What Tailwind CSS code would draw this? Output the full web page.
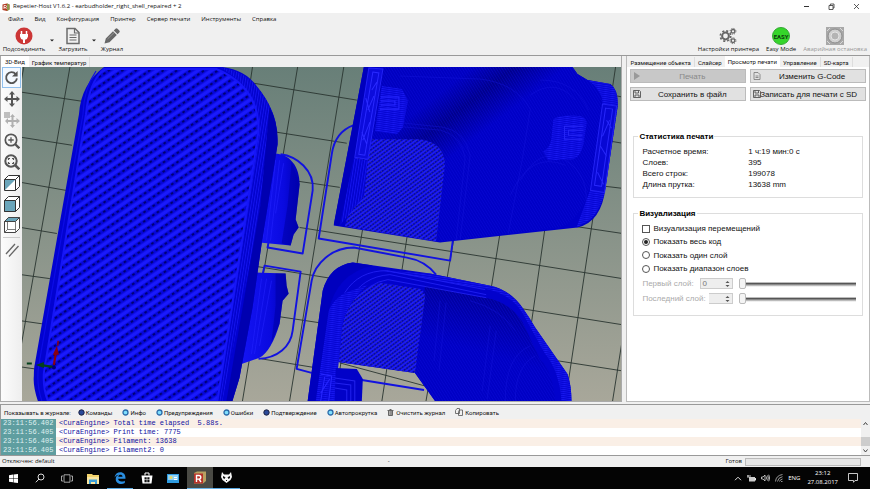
<!DOCTYPE html>
<html lang="ru">
<head>
<meta charset="utf-8">
<title>Repetier-Host V1.6.2</title>
<script src="https://cdn.jsdelivr.net/npm/@tailwindcss/browser@4"></script>
</head>
<body class="flex h-screen flex-col overflow-hidden bg-[#f0f0f0] font-['Open_Sans',sans-serif] text-[6px] leading-[9px] text-[#111]">

<!-- Title bar -->
<header class="flex h-[13px] shrink-0 items-center bg-white pl-[2px]">
  <svg class="size-[8px]" viewBox="0 0 16 16"><path d="M1 3l9-2 5 2v10l-5 3-9-2z" fill="#b23a22"/><path d="M10 1l5 2v10l-5 3z" fill="#8a9a4a"/><path d="M4 12V5h3a2 2 0 010 4H4m3 0l2 3" stroke="#fff" stroke-width="1.6" fill="none"/></svg>
  <h1 class="ml-[3px] flex-1 truncate">Repetier-Host V1.6.2 - earbudholder_right_shell_repaired + 2</h1>
  <div class="flex items-center gap-[18px] pr-[10px]">
    <button aria-label="Свернуть"><svg class="size-[7px]" viewBox="0 0 7 7"><path d="M1 3.5h5" stroke="#333"/></svg></button>
    <button aria-label="Восстановить"><svg class="size-[7px]" viewBox="0 0 7 7" fill="none" stroke="#333" stroke-width=".8"><path d="M1 2.5h4v4H1zM2.4 2.5V1H6v4H5"/></svg></button>
    <button aria-label="Закрыть"><svg class="size-[7px]" viewBox="0 0 7 7"><path d="M1 1l5 5M6 1L1 6" stroke="#333" stroke-width=".8"/></svg></button>
  </div>
</header>

<!-- Menu -->
<nav class="flex h-[12px] shrink-0 items-center gap-[11px] pl-[8px]">
  <button>Файл</button><button>Вид</button><button>Конфигурация</button><button>Принтер</button><button>Сервер печати</button><button>Инструменты</button><button>Справка</button>
</nav>

<!-- Toolbar -->
<div class="flex h-[30px] shrink-0 items-start justify-between pr-[3px] pl-[2px] pt-[2px]">
  <div class="flex items-start">
    <button class="flex w-[44px] flex-col items-center">
      <svg class="size-[18px]" viewBox="0 0 18 18"><circle cx="9" cy="9" r="8.5" fill="#cc3636"/><path d="M6.5 4v3M11.500 4v3" stroke="#fff" stroke-width="1.500"/><path d="M5 7h8v2.500a4 4 0 01-3 3.300V16H8v-3.200A4 4 0 015 9.500z" fill="#fff"/></svg>
      <span>Подсоединить</span>
    </button>
    <span class="mt-[12px] w-[12px] pl-[4px]"><svg class="h-[3px] w-[4px]" viewBox="0 0 4 3"><path d="M0 .5h4L2 2.500z" fill="#222"/></svg></span>
    <button class="flex w-[30px] flex-col items-center">
      <svg class="size-[18px]" viewBox="0 0 18 18" fill="none" stroke="#6b6b6b" stroke-width="1.500"><path d="M3 1.500h8l4 4v11H3z"/><path d="M10.500 1.500V6H15M5.500 8h7M5.500 10.500h7M5.500 13h7" stroke-width="1.200"/></svg>
      <span>Загрузить</span>
    </button>
    <span class="mt-[12px] w-[12px] pl-[4px]"><svg class="h-[3px] w-[4px]" viewBox="0 0 4 3"><path d="M0 .5h4L2 2.500z" fill="#222"/></svg></span>
    <button class="flex w-[24px] flex-col items-center">
      <svg class="size-[18px]" viewBox="0 0 18 18" fill="#686868"><path d="M1.500 16.500l1.300-5L10 4.300l3.800 3.800-7.300 7.200zM10.800 3.500l1.700-1.700q1-1 2 0l1.800 1.800q1 1 0 2l-1.700 1.700z"/><path d="M4.500 12L11 5.700" stroke="#aaa" stroke-width=".7"/></svg>
      <span>Журнал</span>
    </button>
  </div>
  <div class="flex items-start gap-[7px]">
    <button class="flex flex-col items-center">
      <svg class="size-[18px]" viewBox="0 0 18 18" fill="none" stroke="#666"><circle cx="6.500" cy="9" r="3.400" stroke-width="2"/><circle cx="6.500" cy="9" r="5.200" stroke-width="1.600" stroke-dasharray="2.100 2"/><circle cx="14" cy="4.300" r="1.800" stroke-width="1.300"/><circle cx="14" cy="4.300" r="2.900" stroke-dasharray="1.200 1.100"/><circle cx="14" cy="13.700" r="1.800" stroke-width="1.300"/><circle cx="14" cy="13.700" r="2.900" stroke-dasharray="1.200 1.100"/></svg>
      <span>Настройки принтера</span>
    </button>
    <button class="flex flex-col items-center">
      <span class="flex size-[18px] items-center justify-center rounded-full border border-[#35a835] bg-[#35d52a] font-[Roboto,sans-serif] text-[6px] font-bold text-[#0d3c0d]">EASY</span>
      <span>Easy Mode</span>
    </button>
    <button class="flex flex-col items-center text-[#999]" disabled>
      <svg class="size-[18px]" viewBox="0 0 18 18"><path d="M0 0h18v18H0z" fill="#a8a8a8"/><circle cx="9" cy="9" r="7" fill="#cfcfcf" stroke="#8c8c8c"/><circle cx="9" cy="9" r="4" fill="#b4b4b4" stroke="#e4e4e4"/><path d="M1 4l3-3M14 1l3 3M1 14l3 3M14 17l3-3" stroke="#d8d8d8"/></svg>
      <span>Аварийная остановка</span>
    </button>
  </div>
</div>

<!-- Workspace -->
<main class="flex min-h-0 flex-1 border-t border-[#999] bg-[#f0f0f0]">
  <section class="flex min-w-0 flex-1 flex-col border-r border-b border-l border-[#aaa]">
    <div class="flex h-[11px] shrink-0 items-stretch font-[Roboto,sans-serif] text-[6px]" role="tablist">
      <button role="tab" aria-selected="true" class="bg-white px-[4px]">3D-Вид</button>
      <button role="tab" class="mt-px border-r border-[#ddd] px-[3px]">График температур</button>
    </div>
    <div class="flex min-h-0 flex-1">
      <div class="flex w-[21px] shrink-0 flex-col items-center bg-linear-to-r from-[#fcfcfc] to-[#eee]">
        <button aria-label="Вращать" class="flex h-[21px] w-[19px] items-center justify-center border border-[#90c0ee] bg-[#f4f9ff]"><svg class="size-[15px]" viewBox="0 0 16 16" fill="none"><path d="M12.600 4.500A5.800 5.800 0 1013.800 9" stroke="#555" stroke-width="2"/><path d="M14.500 1v6h-6z" fill="#555"/></svg></button>
        <button aria-label="Переместить" class="flex h-[21px] items-center"><svg class="size-[16px]" viewBox="0 0 16 16" fill="#555"><path d="M8 0l3 3.500H9V7h3.500V5L16 8l-3.500 3V9H9v3.500h2L8 16l-3-3.500h2V9H3.500v2L0 8l3.500-3v2H7V3.500H5z"/></svg></button>
        <button aria-label="Переместить объект" class="flex h-[21px] items-center" disabled><svg class="size-[16px]" viewBox="0 0 16 16" fill="#b0b0b0"><path d="M8.500 2l2.500 3H9.500v3h3V6L16 9l-3.500 3v-2h-3v3H11l-2.500 3L6 13h1.500v-3H4v2L1 9l3-3v2h3.500V5H6z"/><path d="M0 0h6v6H0z" opacity=".8"/></svg></button>
        <button aria-label="Масштаб" class="flex h-[21px] items-center"><svg class="size-[16px]" viewBox="0 0 16 16" fill="none" stroke="#555"><circle cx="7" cy="7" r="5.700" stroke-width="1.700"/><path d="M11 11l4.300 4.300" stroke-width="2.300"/><path d="M4.300 7h5.400M7 4.300v5.400" stroke-width="1.300"/></svg></button>
        <button aria-label="Вписать" class="flex h-[21px] items-center"><svg class="size-[16px]" viewBox="0 0 16 16" fill="none" stroke="#555"><circle cx="7" cy="7" r="5.700" stroke-width="2"/><path d="M11 11l4.300 4.300" stroke-width="2.500"/><path d="M4.500 6V4.500H6M8 4.500h1.500V6M9.500 8v1.500H8M6 9.500H4.500V8" stroke-width="1.200"/></svg></button>
        <button aria-label="Изометрия" class="flex h-[21px] items-center"><svg class="size-[16px]" viewBox="0 0 16 16" fill="#fff" stroke="#333"><path d="M.5 4.500l4-4h11v11l-4 4H.5z"/><path d="M1 5h10L1 15z" fill="#6aa5ba" stroke="none"/><path d="M.5 4.500h11v11M11.500 4.500l4-4" fill="none"/></svg></button>
        <button aria-label="Вид спереди" class="flex h-[21px] items-center"><svg class="size-[16px]" viewBox="0 0 16 16" fill="#fff" stroke="#333"><path d="M.5 4.500l4-4h11v11l-4 4H.5z"/><path d="M.5 4.500h11v11H.5z" fill="#6aa5ba"/><path d="M11.500 4.500l4-4"/></svg></button>
        <button aria-label="Вид сверху" class="flex h-[21px] items-center"><svg class="size-[16px]" viewBox="0 0 16 16" fill="#fff" stroke="#444"><path d="M.5 4.500l4-4h11v11l-4 4H.5z"/><path d="M.5 4.500l4-4h11l-4 4z" fill="#6aa5ba"/><path d="M11.500 4.500v11M.5 15.500l3-3h8M3.500 12.500V5" fill="none" stroke-width=".7"/></svg></button>
        <div class="my-[2px] w-[17px] border-t border-[#ccc]"></div>
        <button aria-label="Параллельная проекция" class="flex h-[20px] items-center"><svg class="size-[14px]" viewBox="0 0 14 14" stroke="#666" stroke-width="1.300"><path d="M1 11L10 1M4 13.500L13.500 3"/></svg></button>
      </div>
      <!-- 3D scene -->
      <svg role="img" aria-label="Модель" class="min-h-0 min-w-0 flex-1" viewBox="22 67 600 333" preserveAspectRatio="xMidYMid slice">
        <defs>
          <linearGradient id="sky" x1="0" y1="0" x2="0" y2="1"><stop offset="0" stop-color="#687f78"/><stop offset="1" stop-color="#a8a79a"/></linearGradient>
          <linearGradient id="hollow" gradientUnits="userSpaceOnUse" x1="450" y1="85" x2="485" y2="130"><stop offset="0" stop-color="#0000c0"/><stop offset=".45" stop-color="#00008c"/><stop offset="1" stop-color="#0000c6"/></linearGradient>
          <linearGradient id="hollow2" gradientUnits="userSpaceOnUse" x1="470" y1="290" x2="455" y2="345"><stop offset="0" stop-color="#00009a"/><stop offset="1" stop-color="#0000c4"/></linearGradient>
          <linearGradient id="bulb" x1="0" y1="0" x2="1" y2="0"><stop offset="0" stop-color="#1414f4"/><stop offset=".6" stop-color="#0a0ae0"/><stop offset="1" stop-color="#0000b4"/></linearGradient>
          <pattern id="infill" width="5.500" height="7.600" patternUnits="userSpaceOnUse" patternTransform="rotate(-34)">
            <path d="M0 0h5.500v7.600H0z" fill="#0606d8"/><path d="M0 .5h5.500v3.600H0z" fill="#1a1afc"/><path d="M1 4.800h2.500v2H1z" fill="#00006c"/>
          </pattern>
          <pattern id="mesh" width="3" height="3.400" patternUnits="userSpaceOnUse" patternTransform="rotate(-36)">
            <path d="M0 0h3v3.400H0z" fill="#0000b4"/><path d="M0 0h3v1.700H0z" fill="#1c1cf6"/><path d="M.5 2h1.200v1H.5z" fill="#484880"/>
          </pattern>
          <pattern id="wall" width="2.500" height="8" patternUnits="userSpaceOnUse" patternTransform="rotate(9)"><path d="M0 0h2.500v8H0z" fill="#0202cc"/><path d="M0 0h1v8H0z" fill="#1414ee"/></pattern>
          <pattern id="layers" width="8" height="2" patternUnits="userSpaceOnUse" patternTransform="rotate(8)"><path d="M0 0h8v2H0z" fill="#0606d4"/><path d="M0 0h8v.8H0z" fill="#1818f0"/></pattern>
          <pattern id="fine" width="2.400" height="8" patternUnits="userSpaceOnUse" patternTransform="rotate(-32)"><path d="M0 0h.8v8H0z" fill="#1010e4" opacity=".35"/></pattern>
        </defs>
        <path d="M22 67h600v333H22z" fill="url(#sky)"/>
        <g fill="none" stroke="#2a3531" stroke-width=".9">
          <path d="M25 67l-3 16M71 67L22 347M253 67l-3 20M298 67l-55 333M344 67l-54 333M389 67l-54 333M428 100l-46 300M456 225l-30 175M501 225l-12 75M545 225l-15 105M615 67l-50 333M622 337l-10 63"/>
          <path d="M22 92l60 9M22 137l51 8M22 182l45 8M22 227l36 6M22 274l29 4M22 320l21 3M22 366l14 2M253 83l104 17M277 132l70 11M299 181l41 6M300 227l322 51M258 266l364 58M280 316l60 9M262 358l55 9M340 362l85 23M545 358l77 12M612 95l10 2M610 141l12 2M605 186l17 2M575 226l47 7"/>
        </g>
        <!-- skirts -->
        <g fill="none" stroke="#1212e0" stroke-width="1.900" stroke-linejoin="round">
          <path d="M281 154c16 2 34 16 32 36l-10 63-35-6 1-5"/>
          <path d="M263 274l2-9 36 6-8 59c-2 16-15 27-34 28"/>
          <path d="M354 125c-14 5-20 15-22 29l-13 84 131 22 3-22"/>
          <path d="M312 372l-15-4 15-88c3-17 20-33 42-33l53 10q18 3 29 17M362 379l62 10"/>
        </g>
        <!-- earbud shells beside the left part -->
        <path d="M273 153c18 0 27 14 27 31l-4 35 3 8-5 7-3 11-31-3z" fill="url(#bulb)"/>
        <path d="M255 272l31 1 1 12 2 8-6 7-3 23q-8 27-20 34l-18 6z" fill="url(#bulb)"/>
        <path d="M292 162l8 22-4 35 3 8-5 7-3 11-9-2 6-38zM276 273h10l1 12 2 8-6 7-3 23-8 18 4-36z" fill="#0000a8" opacity=".6"/>
        <path d="M272 160l-9 80M276 160l-9 80M280 160l-9 80M284 163l-8 50M262 278l-10 75M267 278l-12 75M272 280l-12 65" stroke="#2424ff" stroke-width=".7" opacity=".8"/>
        <!-- left part -->
        <path d="M105 67h118q23 3 34 19 21 24 21 58l-16 100-9 63-13 70-7 23H39q-5-15-4-25 0-8 1-12L80 114q2-30 25-47z" fill="#0202d0"/>
        <path d="M220 67q24 4 37 19 21 26 20 48l-14 66-25 125-15 75h-10l46-269q3-40-39-64z" fill="url(#wall)"/>
        <path d="M270 107q9 16 8 37l-16 100-9 63-13 70-7 23h-6l34-196z" fill="#0000b0"/>
        <path d="M105 69h112q43 18 42 62l-17 113-24 156H49q-5-13-4-28L87 114q3-32 18-45z" fill="url(#infill)" stroke="#1616f6" stroke-width="2"/>
        <path d="M97 71Q85 88 84 114L40 364q-3 18 3 36" fill="none" stroke="#0c0ce6" stroke-width="1.200"/>
        <!-- upper right part -->
        <path d="M364 67h208l5 7 10 6 23 4q8 6 7 23l-12 80q-4 35-28 40l-137 15-106-17z" fill="#0000c8"/>
        <path d="M385 67h187l5 7 10 6q12 3 16 24l-14 85q-10 32-30 38l-119 14-70-100-5-72z" fill="url(#hollow)"/>
        <path d="M385 67h187l5 7 10 6q12 3 16 24l-14 85q-10 32-30 38l-119 14-70-100-5-72z" fill="url(#fine)"/>
        <g fill="none" stroke="#1515dc" stroke-width=".7" opacity=".6">
          <path d="M395 122l48 5q22 4 27 28l-10 84M395 126l46 4q21 6 24 28l-9 82M400 76l80 3q35 4 50 30l-8 50-14 74M520 180q20-35 45-20t20 50M510 195q20-45 55-30M530 95q25-18 45 5M540 80q35 0 48 30"/>
        </g>
        <path d="M364 67h5l-14 90-4 40-12 28-5-1z" fill="#0000bc"/>
        <path d="M355 157l13 2 4-20h48q24 3 25 25l-9 77-91-15 10-38z" fill="url(#mesh)"/>
        <path d="M354 158l14 2-4 36-24 29z" fill="url(#wall)"/>
        <path d="M369 68l14 1-15 90-13-2z" fill="#0c0cdc" stroke="#2222f4"/>
        <path d="M373 72l6 1-14 82-6-1zM372 90l5-8M368 110l6-14M370 112l-4-14M363 140l7-18M362 132l5 12" fill="none" stroke="#2a2aff"/>
        <path d="M382 86l20 3 6 12-5 26-6 7-22-3z" fill="url(#layers)"/>
        <path d="M381 97h18v12h-19M381 101h14v4h-14" fill="none" stroke="#2626ff"/>
        <path d="M587 80l22 4q9 5 8 23l-12 80q-3 20-15 32l-14 8 14-38 12-85q0-14-15-24z" fill="url(#layers)"/>
        <path d="M602 104l14 2-12 86-14-2z" fill="#0808d4" stroke="#2222f2"/>
        <path d="M605 108l7 1-11 77-7-1zM606 120l5 8M602 136l7-16M600 146l6 10M597 172l6 12" fill="none" stroke="#2727fa"/>
        <path d="M553 119q8-5 27-3 7 2 6 8l-3 20q-3 12-10 15l-25 1-5-9q7-4 8-12z" fill="url(#layers)"/>
        <path d="M583 126h-19v13h18M583 130h-15v5h14" fill="none" stroke="#2626f4"/>
        <!-- lower right part -->
        <path d="M308 400l15-110q7-25 30-28l77 11 60 12q20 4 33 23l12 19 32 46q4 11 4 27H435l-20-28-77-11-3 39z" fill="#0202cc"/>
        <path d="M425 285l60 12q24 4 37 24l18 38q12 10 15 41H435l-20-28z" fill="url(#hollow2)"/>
        <path d="M425 285l60 12q24 4 37 24l18 38q12 10 15 41H435l-20-28z" fill="url(#fine)"/>
        <path d="M380 270l105 18q25 5 37 24l22 40q15 18 17 48h10q0-15-4-27l-32-46q-21-38-45-42l-60-12z" fill="url(#layers)"/>
        <g fill="none" stroke="#2020f2" stroke-width=".9"><path d="M345 292q14-22 42-22l98 19M350 300q12-24 40-26l96 20M358 300q10-18 30-21l98 18"/></g>
        <g fill="none" stroke="#1515dc" stroke-width=".7" opacity=".6"><path d="M440 300l-6 60M446 302l-7 68M490 325l-8 65M496 330l-9 68M505 400q0-45 25-55M515 400q0-35 20-45M470 300q30 8 45 30"/></g>
        <path d="M342 327q5-26 25-40l13-5 40 6q6 4 5 9l-10 75-76-11z" fill="url(#mesh)"/>
        <path d="M324 325q5-25 22-33l22-8q-22 18-26 43l-3 34-4 39h-20z" fill="url(#layers)"/>
        <path d="M308 400l15-110q7-25 30-28l20 3q-36 8-44 45l-13 90z" fill="#0000be"/>
        <path d="M321 373l11 2-3 25M325 376l-4 24M321 392l9-14" fill="none" stroke="#2727ff"/>
        <path d="M336 367l21 1 6 10-1 22h-27z" fill="#0202c8"/>
        <path d="M335 377l20 3v20M335 382l16 2v16M335 387l12 2v11" fill="none" stroke="#2222ee"/>
        <!-- axes -->
        <path d="M55 364l2-12" stroke="#8a0010" stroke-width="2.200"/><path d="M54 354l4-9 2 9zM58.500 340h1.500l-.5 5h-1.500z" fill="#8a0010"/>
        <path d="M54 366l-10-1.500" stroke="#04401c" stroke-width="2.200"/><path d="M37 364l8-3v6zM28 361.500h5v2h-5z" fill="#04401c"/><circle cx="55" cy="366.500" r="2" fill="#00007a"/>
      </svg>
    </div>
  </section>

  <!-- Right panel -->
  <aside class="ml-[4px] flex w-[28%] shrink-0 flex-col border-r border-b border-l border-[#bbb] bg-white">
    <div class="flex h-[11px] shrink-0 items-stretch bg-[#f0f0f0] font-[Roboto,sans-serif] text-[6px]" role="tablist">
      <button role="tab" class="mt-px border-r border-[#ddd] px-[3px]">Размещение объекта</button>
      <button role="tab" class="mt-px px-[3px]">Слайсер</button>
      <button role="tab" aria-selected="true" class="bg-white px-[3px]">Просмотр печати</button>
      <button role="tab" class="mt-px border-r border-[#ddd] px-[3px]">Управление</button>
      <button role="tab" class="mt-px border-r border-[#ddd] px-[3px]">SD-карта</button>
    </div>
    <div class="flex flex-col px-[3px] pt-[2px] font-['Liberation_Sans',Arial,sans-serif] text-[8px]">
      <div class="grid grid-cols-2 gap-x-[4px] gap-y-[4px]">
        <button disabled class="flex h-[14px] items-center border border-[#bbb] bg-[#c8c8c8] px-[2px] text-[#888]"><svg class="size-[8px]" viewBox="0 0 8 8"><path d="M1 0l6 4-6 4z" fill="#999"/></svg><span class="flex-1">Печать</span></button>
        <button class="flex h-[14px] items-center border border-[#bbb] bg-[#e1e1e1] px-[2px]"><svg class="size-[8px]" viewBox="0 0 8 8" fill="none" stroke="#777" stroke-width=".8"><path d="M1 .5h4l2 2v5H1zM2.500 4h3M2.500 5.500h3"/></svg><span class="flex-1">Изменить G-Code</span></button>
        <button class="flex h-[14px] items-center border border-[#bbb] bg-[#e1e1e1] px-[2px]"><svg class="size-[8px]" viewBox="0 0 8 8" fill="none" stroke="#555" stroke-width=".9"><path d="M.5.5h6l1 1v6h-7zM2 .5v2.500h3.500V.5M2 7.500V5h4v2.500"/></svg><span class="flex-1">Сохранить в файл</span></button>
        <button class="flex h-[14px] items-center border border-[#bbb] bg-[#e1e1e1] px-[2px]"><svg class="size-[8px] shrink-0" viewBox="0 0 8 8" fill="none" stroke="#555" stroke-width=".9"><path d="M.5.5h6l1 1v6h-7zM2 .5v2.500h3.500V.5M2 7.500V5h4v2.500"/></svg><span class="-ml-[7px] flex-1 whitespace-nowrap">Записать для печати с SD</span></button>
      </div>

      <fieldset class="mx-[3px] mt-[31px] min-w-0 border border-[#ddd] px-[8px] pb-[7px]">
        <legend class="-ml-[4px] px-px font-bold text-black">Статистика печати</legend>
        <dl class="mt-[5px] grid grid-cols-2 leading-[11px]">
          <dt>Расчетное время:</dt><dd>1 ч:19 мин:0 с</dd>
          <dt>Слоев:</dt><dd>395</dd>
          <dt>Всего строк:</dt><dd>199078</dd>
          <dt>Длина прутка:</dt><dd>13638 mm</dd>
        </dl>
      </fieldset>

      <fieldset class="mx-[3px] mt-[11px] min-w-0 border border-[#ddd] pr-[6px] pb-[9px] pl-[8px]">
        <legend class="-ml-[4px] px-px font-bold text-black">Визуализация</legend>
        <div class="mt-[4px] flex flex-col">
          <label class="flex h-[13px] items-center gap-[3px]"><input type="checkbox" class="size-[8px] appearance-none border border-[#555] bg-white checked:bg-[#555]">Визуализация перемещений</label>
          <label class="flex h-[13px] items-center gap-[3px]"><input type="radio" name="view" checked class="size-[8px] appearance-none rounded-full border border-[#555] bg-white bg-clip-content p-px checked:bg-[#222]">Показать весь код</label>
          <label class="flex h-[14px] items-center gap-[3px]"><input type="radio" name="view" class="size-[8px] appearance-none rounded-full border border-[#555] bg-white bg-clip-content p-px checked:bg-[#222]">Показать один слой</label>
          <label class="flex h-[13px] items-center gap-[3px]"><input type="radio" name="view" class="size-[8px] appearance-none rounded-full border border-[#555] bg-white bg-clip-content p-px checked:bg-[#222]">Показать диапазон слоев</label>
        </div>
        <div class="mt-px flex h-[15px] items-center text-[#aaa]">
          <label for="first" class="w-[58px]">Первый слой:</label>
          <span class="flex h-[11px] w-[33px] items-center border border-[#ccc] bg-[#eee]"><input id="first" value="0" disabled class="w-0 flex-1 pl-px leading-[9px] text-[#777]"><svg class="mr-[2px] h-[8px] w-[5px]" viewBox="0 0 5 8" fill="#555"><path d="M.5 3l2-2 2 2zM.5 5l2 2 2-2z"/></svg></span>
          <input type="range" value="0" disabled aria-label="Первый слой" class="ml-[6px] h-[11px] w-0 min-w-0 flex-1 appearance-none bg-linear-to-b from-transparent from-35% via-[#555] via-50% to-transparent to-80% [&::-webkit-slider-thumb]:h-[11px] [&::-webkit-slider-thumb]:w-[7px] [&::-webkit-slider-thumb]:appearance-none [&::-webkit-slider-thumb]:rounded-[2px] [&::-webkit-slider-thumb]:border [&::-webkit-slider-thumb]:border-[#bbb] [&::-webkit-slider-thumb]:bg-[#f4f4f4]">
        </div>
        <div class="flex h-[15px] items-center text-[#aaa]">
          <label for="last" class="w-[67px] whitespace-nowrap">Последний слой:</label>
          <span class="flex h-[11px] w-[24px] items-center border border-l-0 border-[#ccc] bg-[#eee]"><input id="last" disabled class="w-0 flex-1 leading-[9px]"><svg class="mr-[2px] h-[8px] w-[5px]" viewBox="0 0 5 8" fill="#555"><path d="M.5 3l2-2 2 2zM.5 5l2 2 2-2z"/></svg></span>
          <input type="range" value="0" disabled aria-label="Последний слой" class="ml-[6px] h-[11px] w-0 min-w-0 flex-1 appearance-none bg-linear-to-b from-transparent from-35% via-[#555] via-50% to-transparent to-80% [&::-webkit-slider-thumb]:h-[11px] [&::-webkit-slider-thumb]:w-[7px] [&::-webkit-slider-thumb]:appearance-none [&::-webkit-slider-thumb]:rounded-[2px] [&::-webkit-slider-thumb]:border [&::-webkit-slider-thumb]:border-[#bbb] [&::-webkit-slider-thumb]:bg-[#f4f4f4]">
        </div>
      </fieldset>
    </div>
  </aside>
</main>

<!-- Log -->
<section class="mt-[2px] shrink-0 border-y border-l border-[#999]">
  <div class="flex h-[14px] items-center gap-[10px] pl-[3px] font-[Roboto,sans-serif] text-[6px]">
    <span class="-mr-[3px]">Показывать в журнале:</span>
    <button class="flex items-center gap-px"><svg class="size-[7px]" viewBox="0 0 7 7"><circle cx="3.500" cy="3.500" r="2.700" fill="#2a4a9a" stroke="#1a2040"/></svg>Команды</button>
    <button class="flex items-center gap-px"><svg class="size-[7px]" viewBox="0 0 7 7"><circle cx="3.500" cy="3.500" r="2.500" fill="#7fe0ff" stroke="#2a6aaa" stroke-width="1.300"/></svg>Инфо</button>
    <button class="flex items-center gap-px"><svg class="size-[7px]" viewBox="0 0 7 7"><circle cx="3.500" cy="3.500" r="2.500" fill="#7fe0ff" stroke="#2a6aaa" stroke-width="1.300"/></svg>Предупреждения</button>
    <button class="flex items-center gap-px"><svg class="size-[7px]" viewBox="0 0 7 7"><circle cx="3.500" cy="3.500" r="2.500" fill="#7fe0ff" stroke="#2a6aaa" stroke-width="1.300"/></svg>Ошибки</button>
    <button class="flex items-center gap-px"><svg class="size-[7px]" viewBox="0 0 7 7"><circle cx="3.500" cy="3.500" r="2.700" fill="#2a4a9a" stroke="#1a2040"/></svg>Подтверждение</button>
    <button class="flex items-center gap-px"><svg class="size-[7px]" viewBox="0 0 7 7"><circle cx="3.500" cy="3.500" r="2.500" fill="#7fe0ff" stroke="#2a6aaa" stroke-width="1.300"/></svg>Автопрокрутка</button>
    <button class="flex items-center gap-[2px]"><svg class="size-[7px]" viewBox="0 0 7 7" fill="none" stroke="#555"><path d="M.5 1.500h6M2.500.5h2M1.500 2v4.500h4V2M3 2v4M4.200 2v4" stroke-width=".9"/></svg>Очистить журнал</button>
    <button class="flex items-center gap-[2px]"><svg class="size-[8px]" viewBox="0 0 8 8" fill="#f0f0f0" stroke="#555" stroke-width=".8"><path d="M.5 2.500l1.500-2h2.500v5h-4zM3.500 3.500l1-1.500h3v5.500h-4z"/></svg>Копировать</button>
  </div>
  <div class="flex bg-white">
    <table class="flex-1 border-collapse font-['Liberation_Mono','Courier_New',monospace] text-[7px] leading-[9px] whitespace-pre text-[#1010a0]">
      <tbody>
        <tr class="bg-[#faefe6]"><td class="w-[55px] bg-[#5f9ea0] pl-[2px] text-[#dff0f0]">23:11:56.402</td><td class="pl-[3px]">&lt;CuraEngine&gt; Total time elapsed  5.88s.</td></tr>
        <tr class="bg-white"><td class="bg-[#5f9ea0] pl-[2px] text-[#dff0f0]">23:11:56.405</td><td class="pl-[3px]">&lt;CuraEngine&gt; Print time: 7775</td></tr>
        <tr class="bg-[#faefe6]"><td class="bg-[#5f9ea0] pl-[2px] text-[#dff0f0]">23:11:56.405</td><td class="pl-[3px]">&lt;CuraEngine&gt; Filament: 13638</td></tr>
        <tr class="bg-white"><td class="bg-[#5f9ea0] pl-[2px] text-[#dff0f0]">23:11:56.405</td><td class="pl-[3px]">&lt;CuraEngine&gt; Filament2: 0</td></tr>
      </tbody>
    </table>
    <div class="flex w-[9px] flex-col items-center bg-[#f0f0f0]">
      <svg class="h-[9px] w-[5px]" viewBox="0 0 5 9"><path d="M.5 6l2-2.500 2 2.500" fill="none" stroke="#444"/></svg>
      <div class="mt-[9px] h-[9px] w-full bg-[#cdcdcd]"></div>
      <svg class="h-[9px] w-[5px]" viewBox="0 0 5 9"><path d="M.5 3.500l2 2.500 2-2.500" fill="none" stroke="#444"/></svg>
    </div>
  </div>
</section>

<!-- Status bar -->
<footer class="flex h-[11px] shrink-0 items-center pr-[9px] pl-[2px]">
  <span class="flex-[16]">Отключен: default</span>
  <span class="flex-[14]">-</span>
  <label for="job" class="mr-[3px]">Готов</label>
  <progress id="job" value="0" max="100" class="h-[8px] w-[116px] appearance-none border border-[#bbb] bg-[#e6e6e6] [&::-webkit-progress-bar]:bg-[#e6e6e6]"></progress>
</footer>

<!-- Taskbar -->
<div class="flex h-[22px] shrink-0 items-stretch justify-between bg-[#040404] text-white">
  <div class="grid w-[240px] grid-cols-9">
    <button aria-label="Пуск" class="flex items-center justify-center"><svg class="size-[9px]" viewBox="0 0 9 9" fill="#fff"><path d="M0 1.200L4 .6v3.600H0zM4.500.5L9 0v4.200H4.500zM0 4.700h4v3.600l-4-.6zM4.500 4.700H9V9l-4.500-.6z"/></svg></button>
    <button aria-label="Поиск" class="flex items-center justify-center"><svg class="size-[10px]" viewBox="0 0 10 10" fill="none" stroke="#ddd"><circle cx="6" cy="4" r="3"/><path d="M4 6L.8 9.300"/></svg></button>
    <button aria-label="Представление задач" class="flex items-center justify-center"><svg class="h-[9px] w-[12px]" viewBox="0 0 12 9" fill="none" stroke="#ccc" stroke-width=".8"><path d="M3 .8h6v7.400H3zM2 2H.5v5H2M10 2h1.500v5H10"/></svg></button>
    <button aria-label="Проводник" class="flex items-center justify-center"><svg class="h-[11px] w-[12px]" viewBox="0 0 12 11"><path d="M0 1h5l1 1h6v9H0z" fill="#f3d36b"/><path d="M0 4h12v7H0z" fill="#fbe6a0"/><path d="M2 6.500h8V11H8V9H4v2H2z" fill="#3fa0d8"/></svg></button>
    <button aria-label="Edge" class="flex items-center justify-center border-b border-[#5aa8e0]"><svg class="size-[12px]" viewBox="0 0 12 12"><path d="M.5 5.500C1 2 3.500.3 6.300.3c3.500 0 5.400 2.500 5.200 6.500H4.200c0 3 4 3.500 6.600 1.900v2.400C7 13 1.700 11.800 1.700 7c0-2 1.300-3.500 3-4.200C3 3 1.500 4 .5 5.500zM4.300 4.800h4.200c0-2.600-3.900-2.600-4.200 0z" fill="#2a8ee0"/></svg></button>
    <button aria-label="Магазин" class="flex items-center justify-center"><svg class="size-[12px]" viewBox="0 0 12 12"><path d="M.5 3.500h11l-1 8h-9z" fill="#fff"/><path d="M4 3.500V1h4v2.500" fill="none" stroke="#fff"/><path d="M3.500 5.200h2.200v2.200H3.500zM6.300 5.200h2.200v2.200H6.300zM3.500 8h2.200v2.200H3.500zM6.300 8h2.200v2.200H6.300z" fill="#111"/></svg></button>
    <button aria-label="Просмотр" class="flex items-center justify-center"><svg class="h-[9px] w-[12px]" viewBox="0 0 12 9"><path d="M0 0h12v9H0z" fill="#2f9be0"/><path d="M1 1h10v5H1z" fill="#8fd0f4"/><circle cx="4" cy="3.500" r="1.500" fill="#e8d860"/><path d="M7 3h3v1H7zM7 5h3v1H7z" fill="#fff"/></svg></button>
    <button aria-label="Repetier-Host" class="flex items-center justify-center border-b border-[#6ab4ea] bg-[#4a4a44]"><svg class="size-[13px]" viewBox="0 0 13 13"><path d="M1 2l3-1.500h9V10l-3 2.500H1z" fill="#b8a060"/><path d="M1 2.500h9v10H1z" fill="#b8322a"/><path d="M3.500 11V4.500H6a1.800 1.800 0 010 3.600H3.500m2.500 0L8 11" stroke="#fff" stroke-width="1.400" fill="none"/></svg></button>
    <button aria-label="foobar2000" class="flex items-center justify-center border-b border-[#5aa8e0]"><svg class="size-[11px]" viewBox="0 0 11 11"><path d="M1 0l2 2.500h5L10 0l1 5-1.500 3-4 3-4-3L0 5z" fill="#f4f4f4"/><path d="M2 4l2.500 1.300L3.500 7 2 6zM9 4L6.500 5.300 7.500 7 9 6zM5 8h1v1H5z" fill="#111"/></svg></button>
  </div>
  <div class="flex items-center gap-[5px] pr-[12px]">
    <svg class="h-[5px] w-[8px]" viewBox="0 0 8 5"><path d="M1 4.200l3-3 3 3" fill="none" stroke="#ddd"/></svg>
    <svg class="h-[7px] w-[9px]" viewBox="0 0 9 7"><path d="M2 2h6v4.500H2z" fill="#ccc"/><path d="M0 1h4M1 0v3M8 3.500h1v1.500H8z" stroke="#eee" fill="#eee" stroke-width=".8"/></svg>
    <svg class="h-[8px] w-[9px]" viewBox="0 0 9 8" fill="none" stroke="#ddd" stroke-width=".8"><path d="M.5 3h1.500l2-2v6l-2-2H.5zM5.300 2.500q1 1.500 0 3M6.500 1.500q1.800 2.500 0 5M7.700.7q2 3.300 0 6.600"/></svg>
    <svg class="size-[8px]" viewBox="0 0 8 8" fill="none" stroke="#bbb" stroke-width=".8"><path d="M.5 7.500Q1 1.500 7.500.5M2.500 7.500Q3 3.500 7.500 2.700M4.500 7.500Q5 5.500 7.500 5M6 7.500h1.500"/></svg>
    <span>ENG</span>
    <div class="ml-[2px] text-center"><div>23:12</div><div>27.08.2017</div></div>
    <svg class="ml-[5px] size-[10px]" viewBox="0 0 10 10" fill="none" stroke="#ddd" stroke-width=".9"><path d="M.5.5h9v7H7L5.500 9.300V7.500h-5z"/></svg>
  </div>
</div>
</body>
</html>
